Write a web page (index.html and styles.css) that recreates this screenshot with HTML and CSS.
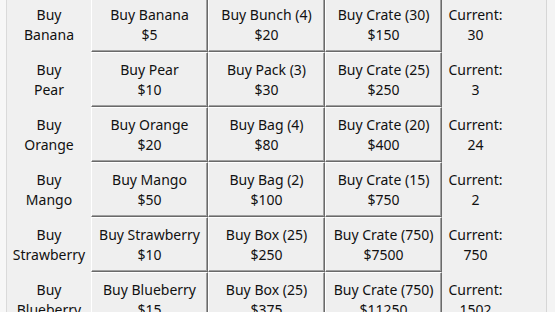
FILE: index.html
```html
<!DOCTYPE html>
<html lang="en">
<head>
    <meta charset="UTF-8">
    <title>Fruit Shop</title>
    <link rel="stylesheet" href="styles.css">
</head>
<body>
    <div class="window">
        <div class="edge-left"></div>
        <div class="content">
            <div class="shop">
                <div class="label">Buy<br>Banana</div>
                <button class="buy">Buy Banana<br>$5</button>
                <button class="buy">Buy Bunch (4)<br>$20</button>
                <button class="buy">Buy Crate (30)<br>$150</button>
                <div class="label current">Current:<br>30</div>

                <div class="label">Buy<br>Pear</div>
                <button class="buy">Buy Pear<br>$10</button>
                <button class="buy">Buy Pack (3)<br>$30</button>
                <button class="buy">Buy Crate (25)<br>$250</button>
                <div class="label current">Current:<br>3</div>

                <div class="label">Buy<br>Orange</div>
                <button class="buy">Buy Orange<br>$20</button>
                <button class="buy">Buy Bag (4)<br>$80</button>
                <button class="buy">Buy Crate (20)<br>$400</button>
                <div class="label current">Current:<br>24</div>

                <div class="label">Buy<br>Mango</div>
                <button class="buy">Buy Mango<br>$50</button>
                <button class="buy">Buy Bag (2)<br>$100</button>
                <button class="buy">Buy Crate (15)<br>$750</button>
                <div class="label current">Current:<br>2</div>

                <div class="label">Buy<br>Strawberry</div>
                <button class="buy">Buy Strawberry<br>$10</button>
                <button class="buy">Buy Box (25)<br>$250</button>
                <button class="buy">Buy Crate (750)<br>$7500</button>
                <div class="label current">Current:<br>750</div>

                <div class="label">Buy<br>Blueberry</div>
                <button class="buy">Buy Blueberry<br>$15</button>
                <button class="buy">Buy Box (25)<br>$375</button>
                <button class="buy">Buy Crate (750)<br>$11250</button>
                <div class="label current">Current:<br>1502</div>
            </div>
        </div>
        <div class="edge-right"></div>
    </div>
</body>
</html>
```

FILE: styles.css
```css
body {
    margin: 0;
    padding: 0;
    background-color: #f0f0f0;
    font-family: "Noto Sans", "Open Sans", sans-serif;
    font-size: 14px;
    color: #111;
    overflow: hidden;
}
.window {
    display: flex;
    width: 555px;
    height: 312px;
    overflow: hidden;
}
.edge-left {
    width: 6px;
    background-color: #f7f7f7;
    border-right: 1px solid #dadada;
}
.content {
    flex: 1;
}
.edge-right {
    width: 8px;
    background-color: #f4f4f4;
    border-left: 1px solid #d6d6d6;
}
.shop {
    display: grid;
    grid-template-columns: 84px 117px 117px 117px 67px;
    grid-auto-rows: 55px;
    margin-top: -3px;
}
.label {
    display: flex;
    align-items: center;
    justify-content: center;
    text-align: center;
    line-height: 20px;
}
.buy {
    margin: 0;
    padding: 0;
    font: inherit;
    color: inherit;
    line-height: 20px;
    background-color: #efefef;
    border: 1px solid;
    border-color: #ffffff #6a6a6a #6a6a6a #ffffff;
    box-shadow: inset -1px -1px 0 #a0a0a0;
}
```
